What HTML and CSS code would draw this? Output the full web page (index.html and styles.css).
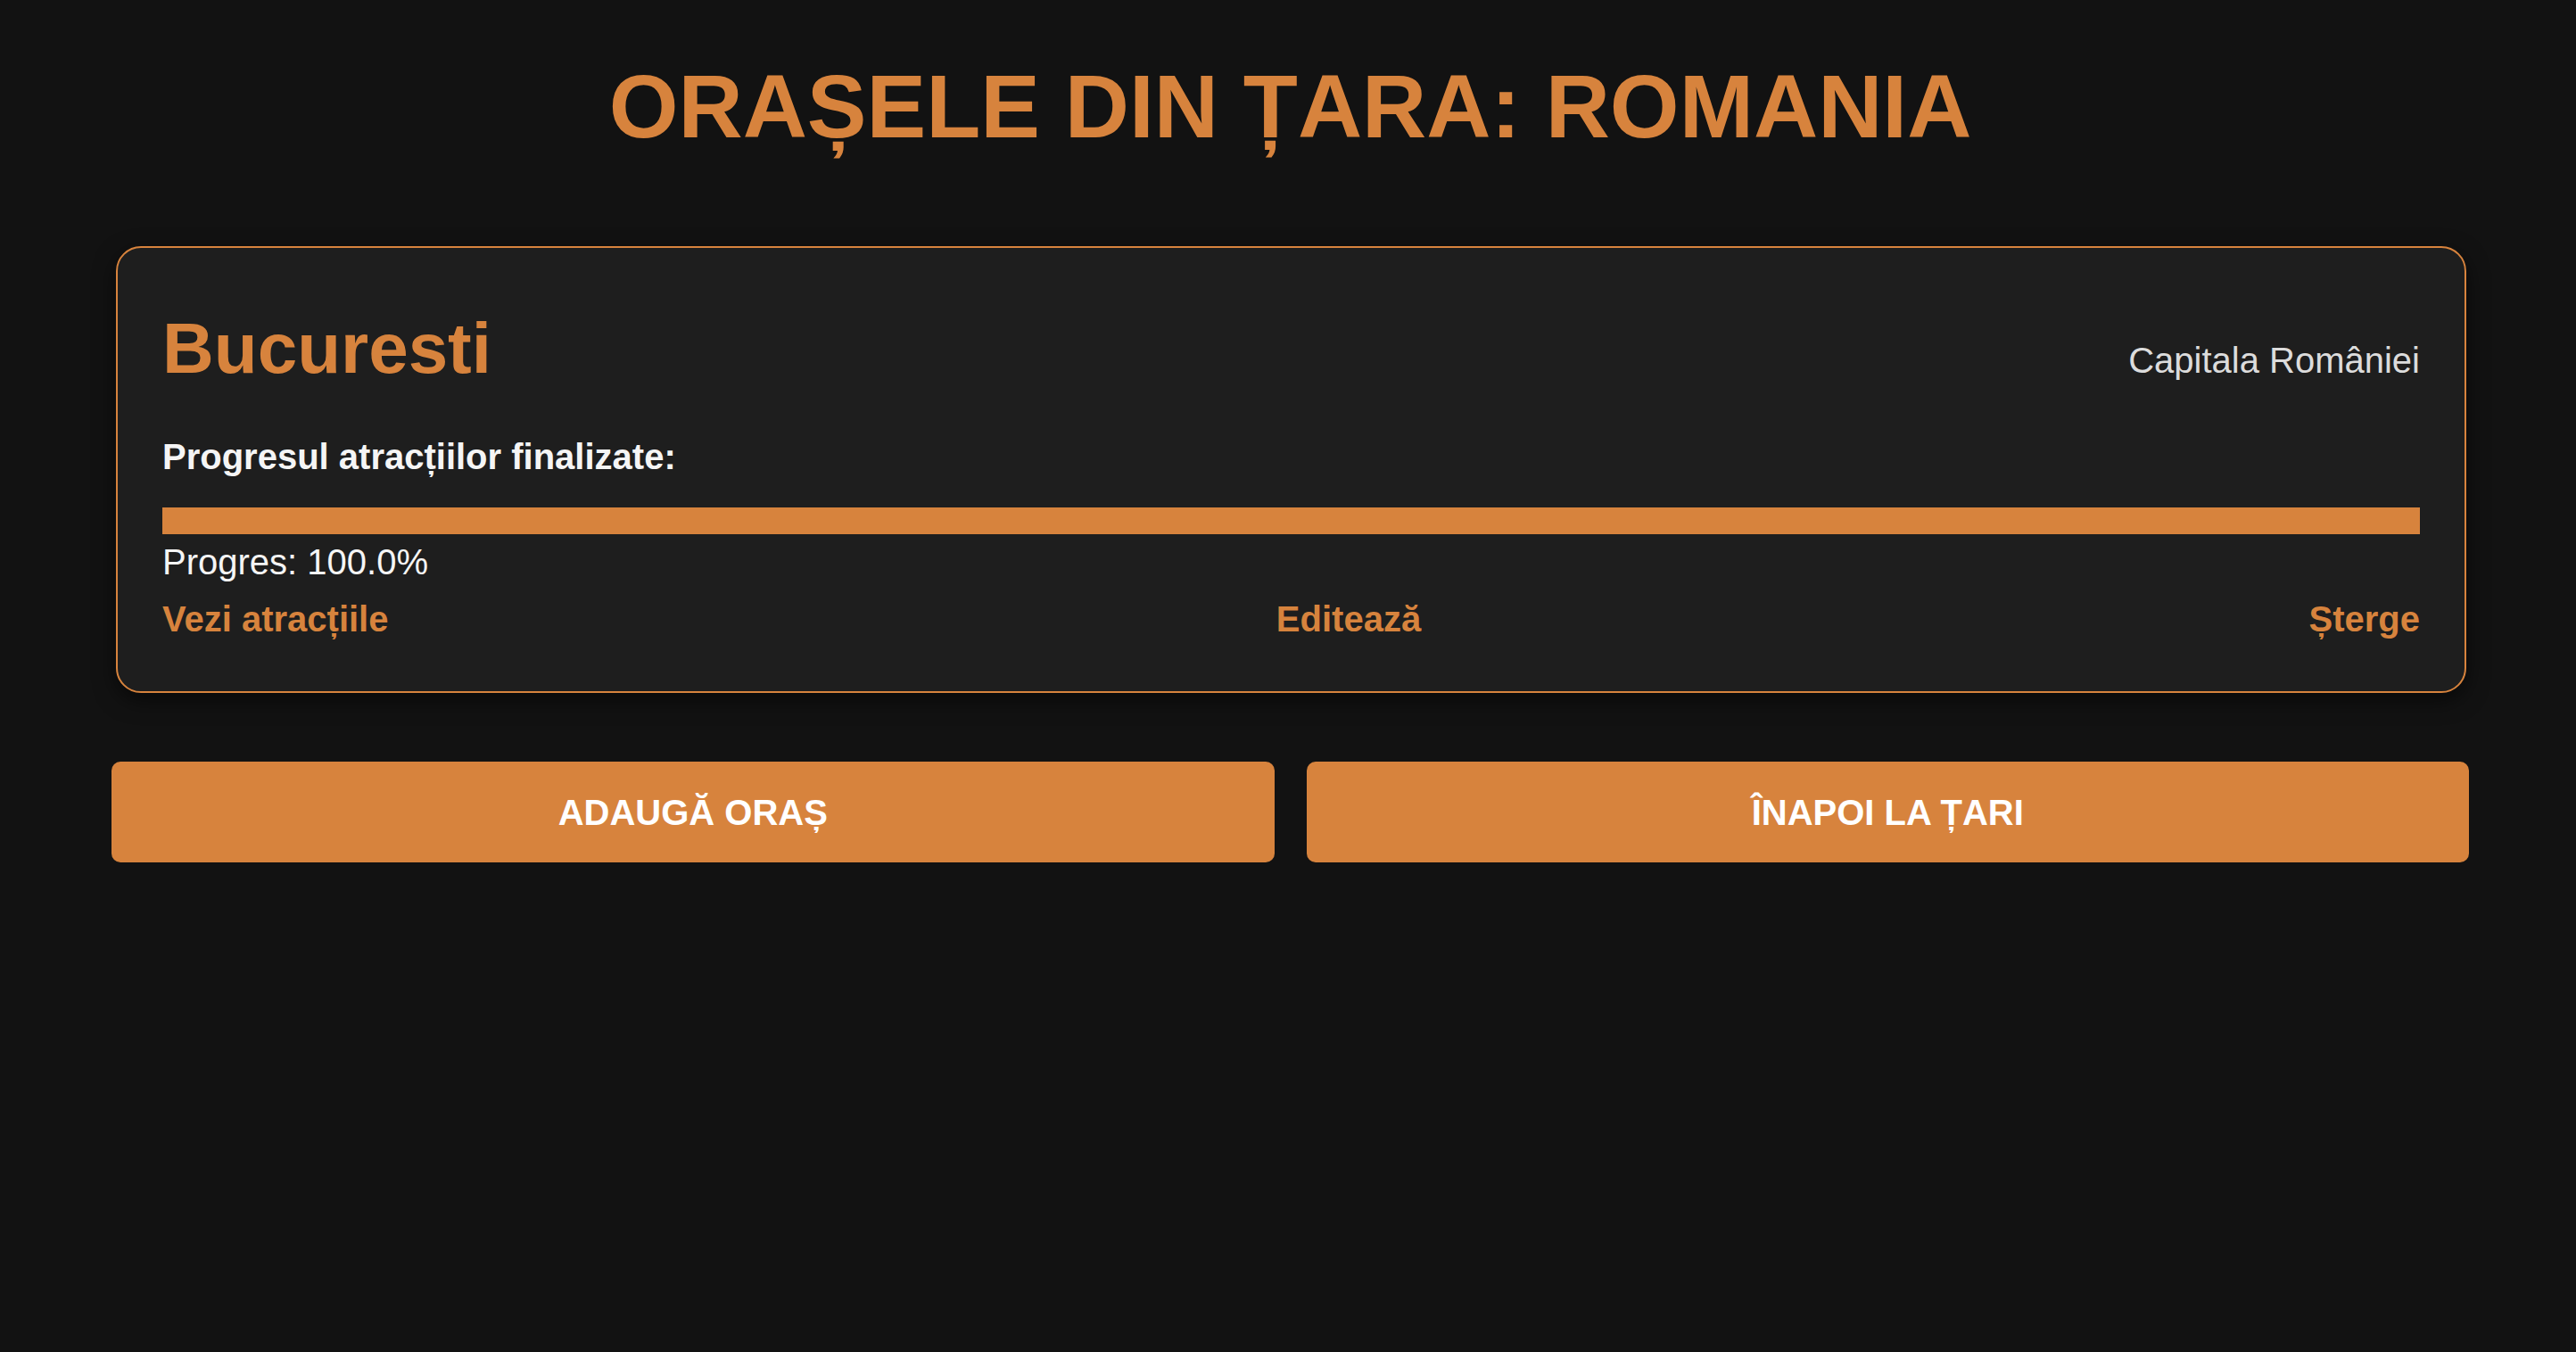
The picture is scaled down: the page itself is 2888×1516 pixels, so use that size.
FILE: index.html
```html
<!DOCTYPE html>
<html lang="ro">
<head>
<meta charset="utf-8">
<title>Orașele din țara: Romania</title>
<link rel="stylesheet" href="styles.css">
</head>
<body>
<div class="page">
  <h1 class="title">ORAȘELE DIN ȚARA: ROMANIA</h1>
  <div class="card">
    <div class="card-header">
      <h2 class="city">Bucuresti</h2>
      <span class="subtitle">Capitala României</span>
    </div>
    <div class="progress-label">Progresul atracțiilor finalizate:</div>
    <div class="bar"><div class="bar-fill" style="width: 100%"></div></div>
    <div class="progress-text">Progres: 100.0%</div>
    <div class="actions">
      <a class="action" href="#">Vezi atracțiile</a>
      <a class="action" href="#">Editează</a>
      <a class="action" href="#">Șterge</a>
    </div>
  </div>
  <div class="buttons">
    <button class="btn">Adaugă oraș</button>
    <button class="btn">Înapoi la țari</button>
  </div>
</div>
</body>
</html>
```
FILE: styles.css
```css
html, body {
  margin: 0;
  background: #121212;
}
body {
  font-family: "Liberation Sans", Arial, sans-serif;
  color: #f2f2f2;
  font-size: 40px;
  line-height: 46px;
}
.page {
  padding: 62px 120px 0 125px;
}
.title {
  margin: 0;
  text-align: center;
  font-size: 100px;
  font-weight: bold;
  line-height: 115px;
  color: #d7833d;
}
.card {
  margin: 99px 3px 0 5px;
  padding: 50px 50px 58px;
  background: #1e1e1e;
  border: 2px solid #d7833d;
  border-radius: 28px;
  box-shadow: 0 8px 24px rgba(0, 0, 0, 0.55);
}
.card-header {
  margin-top: 17px;
  display: flex;
  justify-content: space-between;
  align-items: baseline;
}
.city {
  margin: 0;
  font-size: 80px;
  font-weight: bold;
  line-height: 92px;
  color: #d7833d;
}
.subtitle {
  font-size: 40px;
  line-height: 46px;
  color: #dcdcdc;
}
.progress-label {
  margin-top: 52px;
  font-weight: bold;
  color: #f5f5f5;
}
.bar {
  margin-top: 34px;
  height: 30px;
  background: #333;
}
.bar-fill {
  height: 100%;
  background: #d7833d;
}
.progress-text {
  margin-top: 8px;
  color: #f5f5f5;
}
.actions {
  margin-top: 18px;
  display: flex;
  justify-content: space-between;
}
.action {
  font-weight: bold;
  color: #d7833d;
  text-decoration: none;
}
.buttons {
  margin-top: 77px;
  display: grid;
  grid-template-columns: 1fr 1fr;
  gap: 36px;
}
.btn {
  padding: 34px 0 33px;
  border: none;
  border-radius: 10px;
  background: #d7833d;
  color: #ffffff;
  font-family: "Liberation Sans", Arial, sans-serif;
  font-size: 40px;
  font-weight: bold;
  line-height: 46px;
  text-transform: uppercase;
}
```
